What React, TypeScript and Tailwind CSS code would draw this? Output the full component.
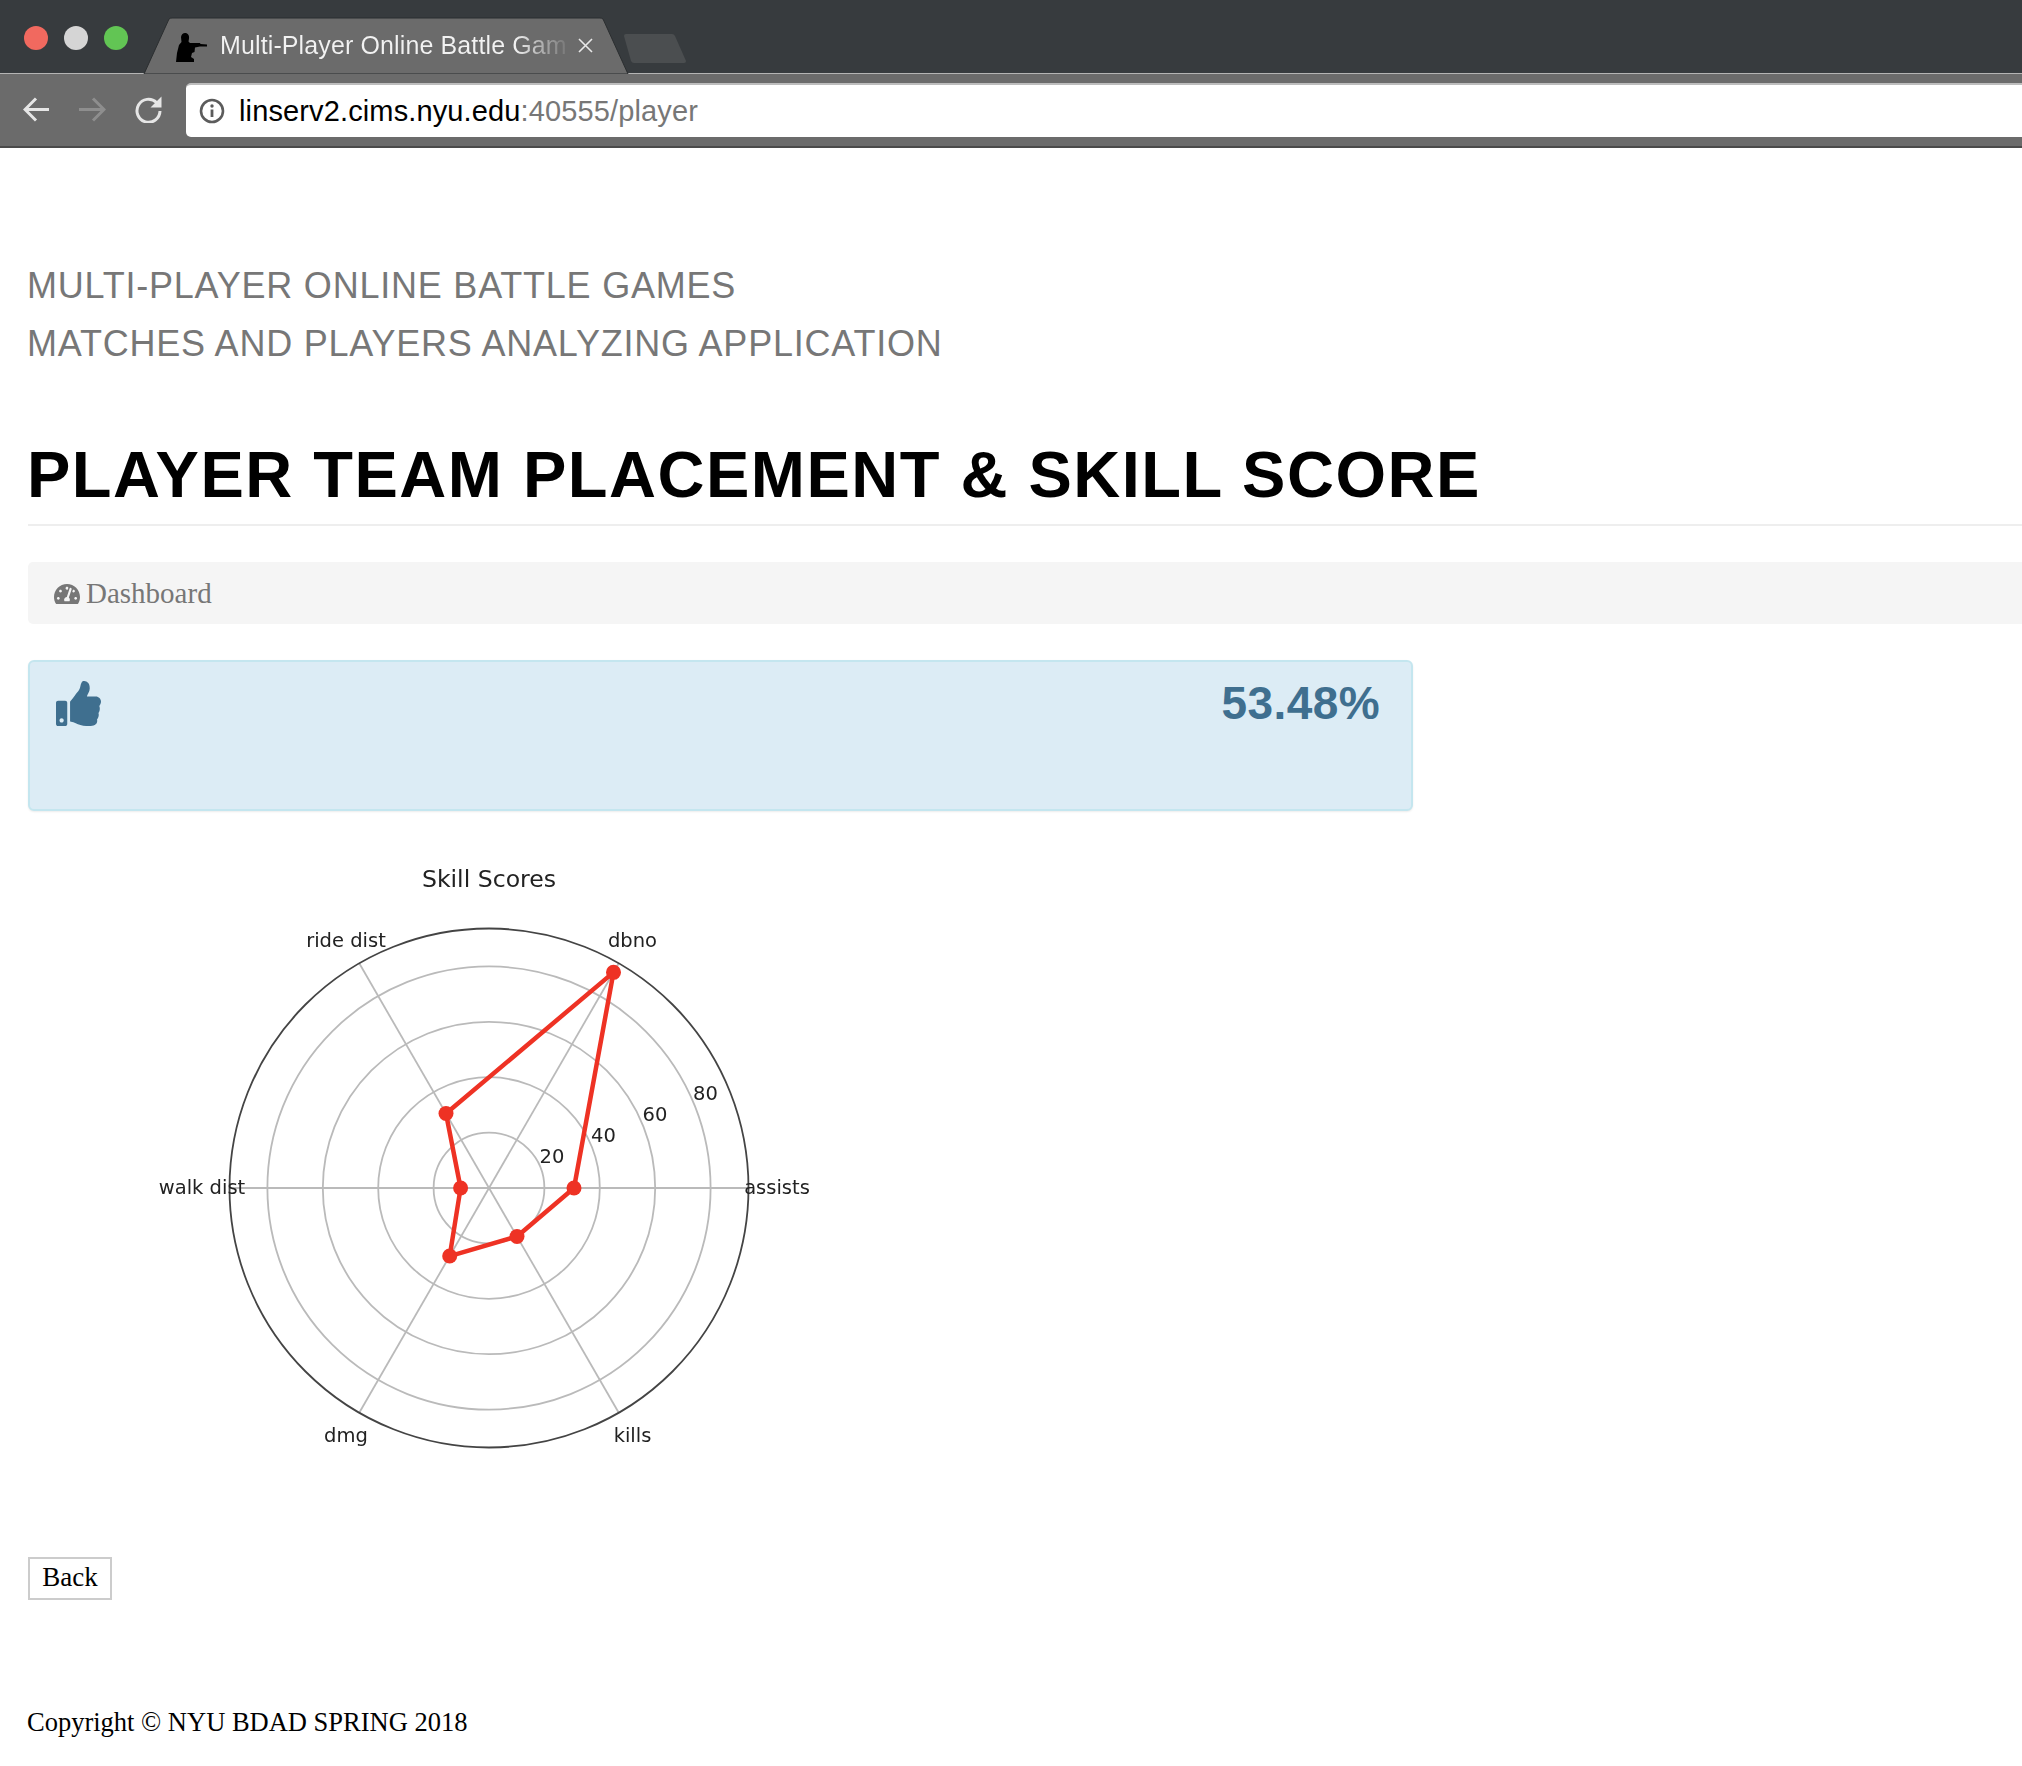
import { FaTachometerAlt, FaThumbsUp } from 'react-icons/fa';

const RINGS = [55.4, 110.8, 166.2, 221.6];
const CX = 349;
const CY = 337;
const OUTER = 259.5;

// radius of each plotted point, going counter-clockwise from assists
const POINTS = [85, 249, 86, 28.4, 78.6, 56];
const ANGLES = [0, 60, 120, 180, 240, 300];

function polar(r: number, deg: number) {
  const a = (deg * Math.PI) / 180;
  return { x: CX + r * Math.cos(a), y: CY - r * Math.sin(a) };
}

function RadarChart() {
  const pts = POINTS.map((r, i) => polar(r, ANGLES[i]));
  const line = pts.map((p) => `${p.x},${p.y}`).join(' ');
  return (
    <svg width="700" height="620" viewBox="0 0 700 620" className="block ml-[112px] blur-[0.5px]" style={{ fontFamily: '"DejaVu Sans", sans-serif' }}>
      <text x="349" y="36" textAnchor="middle" fontSize="23.6" fill="#222">Skill Scores</text>
      {RINGS.map((r) => (
        <circle key={r} cx={CX} cy={CY} r={r} fill="none" stroke="#bababa" strokeWidth="1.8" />
      ))}
      {ANGLES.map((a) => {
        const end = polar(OUTER, a);
        return <line key={a} x1={CX} y1={CY} x2={end.x} y2={end.y} stroke="#bababa" strokeWidth="1.8" />;
      })}
      <circle cx={CX} cy={CY} r={OUTER} fill="none" stroke="#444" strokeWidth="1.8" />
      <polygon points={line} fill="none" stroke="#ee3224" strokeWidth="4.5" strokeLinejoin="round" />
      {pts.map((p, i) => (
        <circle key={i} cx={p.x} cy={p.y} r="7.5" fill="#ee3224" />
      ))}
      <g fontSize="19.5" textAnchor="middle" fill="#222">
        <text x="206" y="96">ride dist</text>
        <text x="492.5" y="96">dbno</text>
        <text x="62" y="343">walk dist</text>
        <text x="637" y="343">assists</text>
        <text x="206" y="591">dmg</text>
        <text x="492.5" y="591">kills</text>
        <text x="565.5" y="249">80</text>
        <text x="515" y="270">60</text>
        <text x="463.5" y="291">40</text>
        <text x="412" y="312">20</text>
      </g>
    </svg>
  );
}

function BrowserChrome() {
  return (
    <div className="font-['Liberation_Sans',sans-serif]">
      {/* tab strip */}
      <div className="relative h-[74px] bg-[#373b3e] border-b border-[#b4b4b4]">
        <div className="absolute left-[24px] top-[26px] flex gap-[16px]">
          <span className="w-6 h-6 rounded-full bg-[#f1695f]" />
          <span className="w-6 h-6 rounded-full bg-[#d5d5d5]" />
          <span className="w-6 h-6 rounded-full bg-[#62c554]" />
        </div>
        <svg className="absolute left-[140px] top-[16px]" width="492" height="58" viewBox="0 0 492 58">
          <path d="M4 58 L29 3 Q30 2 32 2 L460 2 Q462 2 463 3 L488 58 Z" fill="#6b6b6b" stroke="#2b2e30" strokeWidth="1" />
        </svg>
        <svg className="absolute left-[622px] top-[33px]" width="66" height="31" viewBox="0 0 66 31">
          <path d="M2 3 Q2 1 4 1 L50 1 Q52 1 53 3 L64 28 Q64 30 62 30 L12 30 Q10 30 9 28 Z" fill="#4b4e50" />
        </svg>
        {/* favicon: kneeling shooter silhouette */}
        <svg className="absolute left-[176px] top-[33px]" width="32" height="30" viewBox="0 0 32 30">
          <path d="M9 0 C12 0 13.5 2.5 13 5.5 L12.5 8.5 L14 10 L24 10 L24.5 11 L31 11.5 L31 13.5 L24 13.5 L19 14.5 L18.5 19 L16 20 L15 24 L18 26 L18 29 L0 29 L1 20 L3 12 L5.5 9 L5 4 C5.5 1.5 7 0 9 0 Z" fill="#000" />
        </svg>
        <div className="absolute left-[220px] top-[29px] h-[32px] whitespace-nowrap text-[25px] tracking-[0.12px] leading-[32px] text-transparent bg-clip-text bg-gradient-to-r from-[#f2f2f2] from-[85%] to-[#777777]">
          Multi-Player Online Battle Gam
        </div>
        <svg className="absolute left-[578px] top-[38px]" width="15" height="15" viewBox="0 0 15 15">
          <path d="M1 1 L14 14 M14 1 L1 14" stroke="#e8e8e8" strokeWidth="1.6" />
        </svg>
      </div>
      {/* toolbar */}
      <div className="flex items-center h-[74px] bg-[#6b6b6b] border-b-2 border-[#4a4a4a] pb-[1px]">
        <svg className="ml-[23px] shrink-0" width="26" height="25" viewBox="0 0 26 25" fill="none" stroke="#e6e6e6" strokeWidth="3">
          <path d="M26 12.5 H3 M13 1.5 L2 12.5 L13 23.5" />
        </svg>
        <svg className="ml-[30px] shrink-0" width="27" height="25" viewBox="0 0 27 25" fill="none" stroke="#8e8e8e" strokeWidth="3">
          <path d="M0 12.5 H24 M14 1.5 L25 12.5 L14 23.5" />
        </svg>
        <svg className="ml-[29px] shrink-0" width="27" height="27" viewBox="0 0 27 27">
          <path d="M21.5 6.5 A11.5 11.5 0 1 0 25 15" fill="none" stroke="#e6e6e6" strokeWidth="3" />
          <path d="M26.5 0.5 V11.5 H15.5 Z" fill="#e6e6e6" />
        </svg>
        <div className="ml-[24px] flex-1 flex items-center h-[54px] bg-white rounded-l-[5px] border-t-2 border-[#bdbdbd]">
          <svg className="ml-[13px] shrink-0" width="26" height="26" viewBox="0 0 26 26" fill="none">
            <circle cx="13" cy="13" r="11" stroke="#5c5c5c" strokeWidth="2.6" />
            <circle cx="13" cy="8" r="1.7" fill="#5c5c5c" />
            <path d="M13 11.5 V19" stroke="#5c5c5c" strokeWidth="2.8" />
          </svg>
          <span className="ml-[14px] mt-[2px] text-[29px] tracking-[0.13px] text-black whitespace-nowrap">
            linserv2.cims.nyu.edu<span className="text-[#777]">:40555/player</span>
          </span>
        </div>
      </div>
    </div>
  );
}

export default function App() {
  return (
    <div className="min-h-[1766px] bg-white overflow-hidden">
      <BrowserChrome />
      <div className="pl-[28px] pt-[109px]">
        <div className="font-['Liberation_Sans',sans-serif] text-[36px] tracking-[0.78px] leading-[58px] text-[#777] -ml-[1px]">
          <div>MULTI-PLAYER ONLINE BATTLE GAMES</div>
          <div>MATCHES AND PLAYERS ANALYZING APPLICATION</div>
        </div>
        <div className="mt-[62px] pb-[9px] border-b-2 border-[#eeeeee]">
          <h1 className="font-['Liberation_Sans',sans-serif] font-bold text-[65px] tracking-[1.5px] leading-[80px] text-black -ml-[1px]">
            PLAYER TEAM PLACEMENT &amp; SKILL SCORE
          </h1>
        </div>
        <div className="mt-[36px] flex items-center h-[62px] pl-[26px] pt-[1px] bg-[#f5f5f5] rounded-l-[5px] font-['Liberation_Serif',serif] text-[29px] text-[#777]">
          <FaTachometerAlt className="text-[26px]" />
          <span className="ml-[6px]">Dashboard</span>
        </div>
        <div className="mt-[36px] w-[1385px] h-[151px] flex justify-between bg-[#dcecf5] border-[2.5px] border-[#c4e6ef] rounded-[6px] shadow-[0_1px_2px_rgba(0,0,0,0.08)] text-[#3f6f8f] pl-[26px] pr-[31px]">
          <FaThumbsUp className="text-[45px] mt-[19px]" />
          <span className="font-['Liberation_Sans',sans-serif] font-bold text-[46px] tracking-[0.4px] leading-[52px] mt-[15px]">53.48%</span>
        </div>
        <div className="mt-[40px]">
          <RadarChart />
        </div>
        <button className="mt-[86px] block w-[84px] h-[43px] pb-[3px] border-2 border-[#cccccc] bg-white font-['Liberation_Serif',serif] text-[27px] leading-none text-black">
          Back
        </button>
        <p className="mt-[103px] font-['Liberation_Serif',serif] text-[26.5px] leading-[38px] text-black -ml-[1px]">
          Copyright © NYU BDAD SPRING 2018
        </p>
      </div>
    </div>
  );
}
